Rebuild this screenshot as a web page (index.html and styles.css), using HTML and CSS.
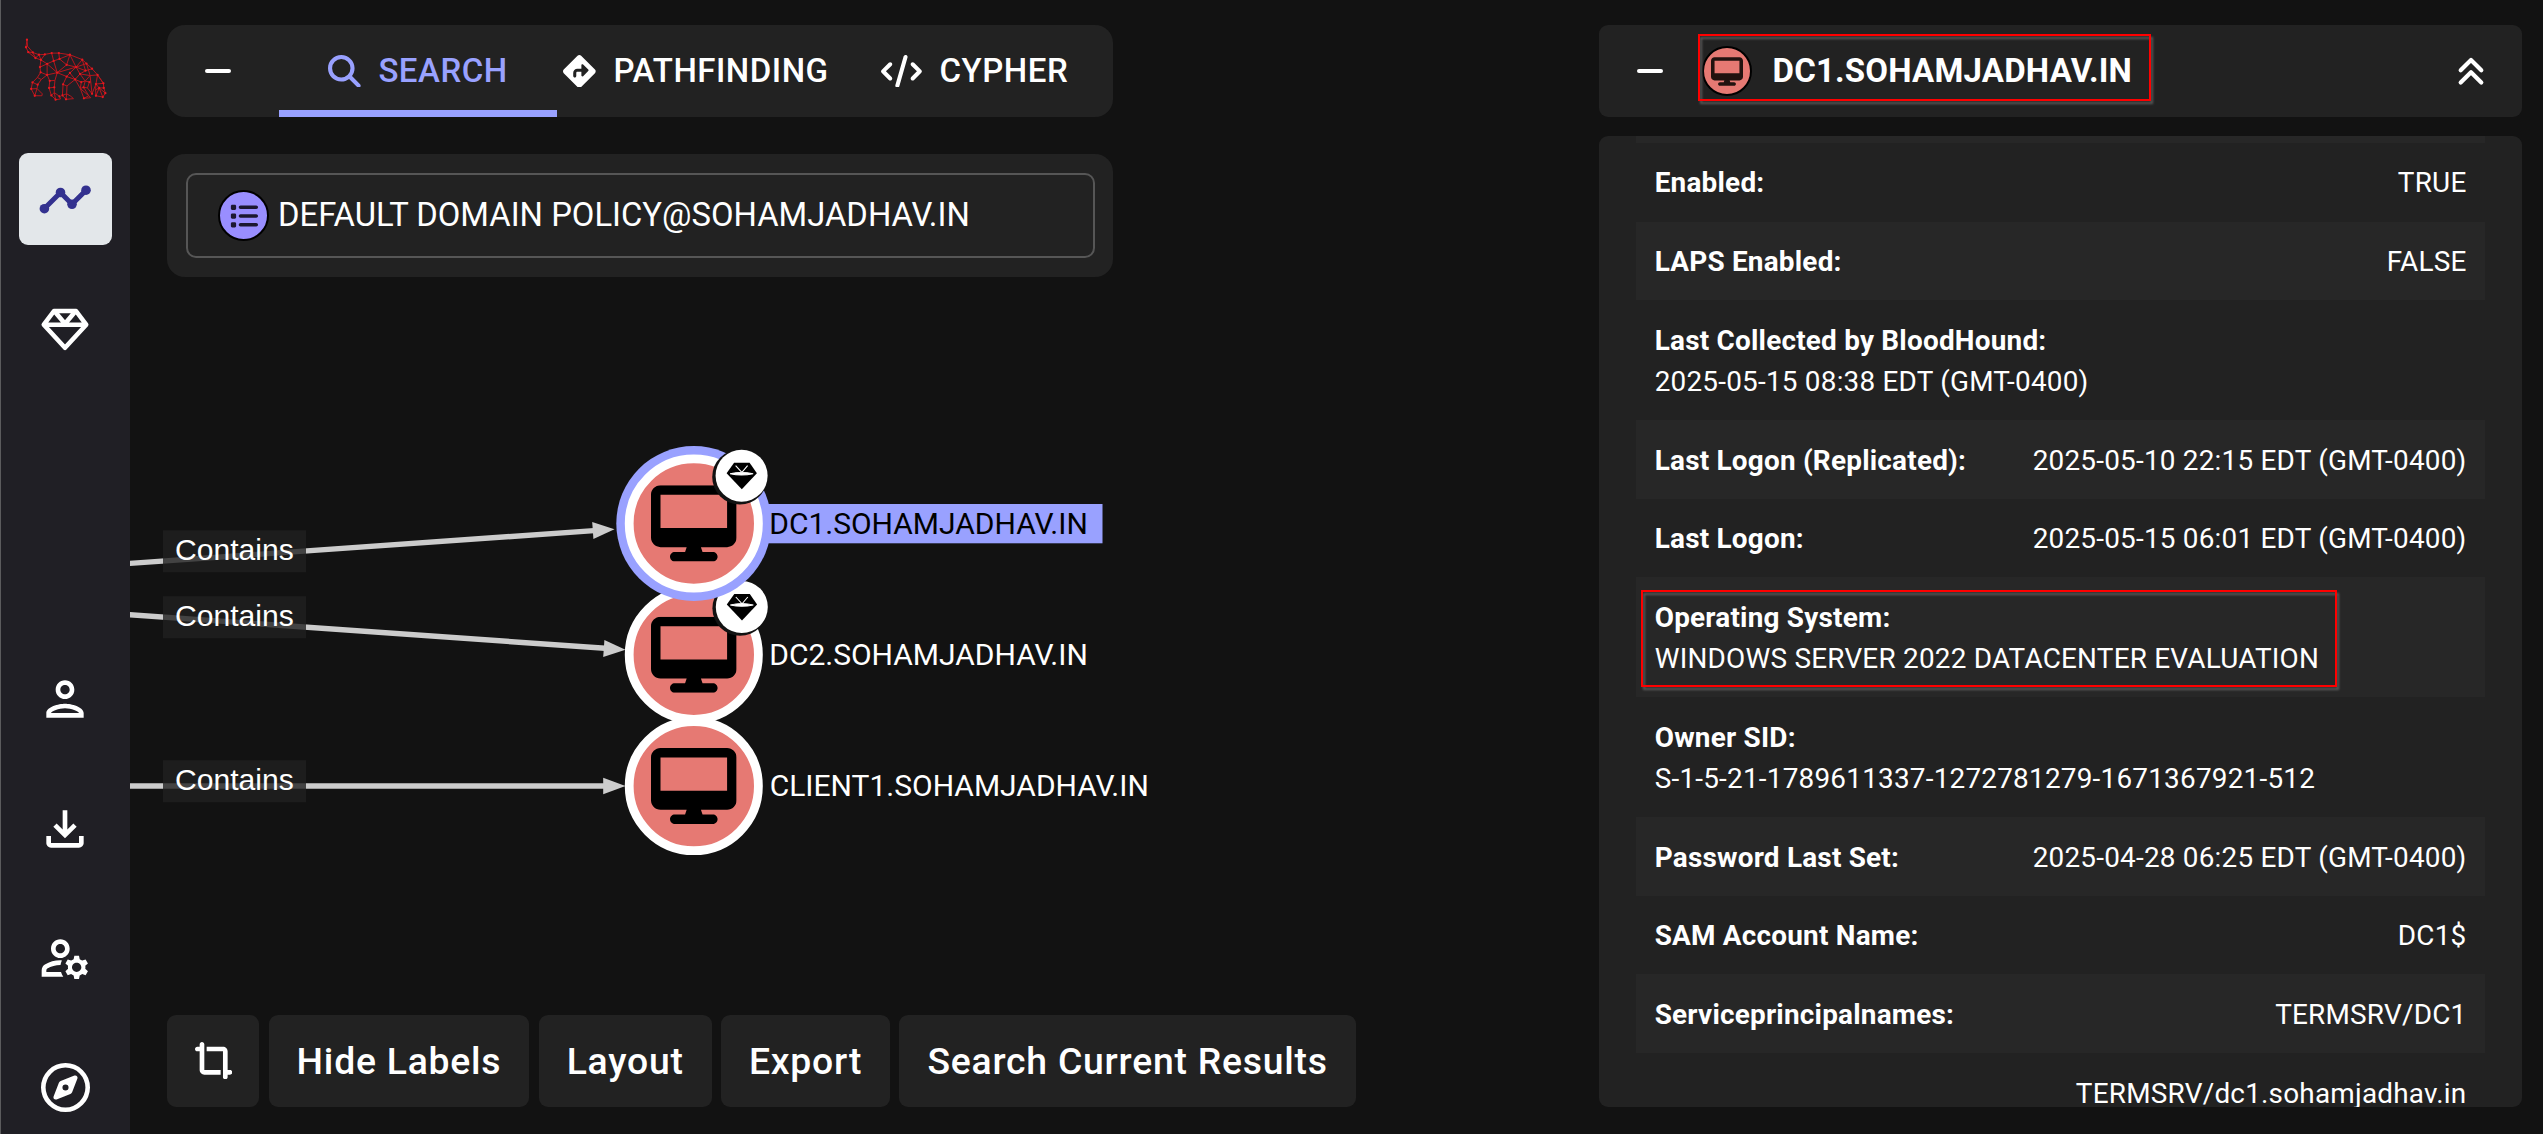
FILE: index.html
```html
<!DOCTYPE html>
<html lang="en">
<head>
<meta charset="utf-8">
<title>BloodHound</title>
<link rel="stylesheet" href="styles.css">
</head>
<body>
<svg width="0" height="0" class="defs" aria-hidden="true">
  <symbol id="desktop" viewBox="0 0 576 512"><path d="M64 0C28.7 0 0 28.7 0 64V352c0 35.3 28.7 64 64 64H240l-10.7 32H160c-17.7 0-32 14.3-32 32s14.3 32 32 32H416c17.7 0 32-14.3 32-32s-14.3-32-32-32H346.7L336 416H512c35.3 0 64-28.7 64-64V64c0-35.3-28.7-64-64-64H64zM512 64V288H64V64H512z"/></symbol>
  <symbol id="tier" viewBox="0 0 60 60">
    <circle cx="28.2" cy="31.2" r="27.6" fill="#121212"/>
    <circle cx="30" cy="30" r="26" fill="#fff"/>
    <path d="M22.5 17H38L45.3 27.5L30.2 43.5L15 27.5Z" fill="#000"/>
    <path d="M18.5 28Q30 25 41.5 28Q30 30.5 18.5 28ZM24 20L30 26.5M36 20L30.5 26.5" fill="#fff" stroke="#fff" stroke-width="1.1"/>
  </symbol>
</svg>
<div class="app">
  <nav class="sidebar">
    <svg class="logo" viewBox="0 0 312 240">
      <path d="M36 30L33 53L40 68L62 86L79 92L73 76L54 69L38 50ZM33 53L38 50M40 68L54 69L62 86L73 76M73 76L91 75L112 71L134 71L168 76L206 91L219 103L236 119L253 138L271 164L272 178L277 194L269 206L248 202L247 184L248 166L258 178L272 178M271 164L248 166L236 196L230 140L219 103M79 92L91 75M79 92L98 104L118 95L136 89L158 107L187 114L216 125L236 119M112 71L118 95L129 131L98 104L98 138L129 131L158 107L168 76L136 89L134 71M168 76L187 114L206 91L216 125L199 135L187 114L219 103M129 131L187 114L168 132L158 143L129 131M199 135L184 152L168 132M199 135L230 140L253 138L248 166M199 135L215 157L230 140M79 92L76 114L78 130L98 138M76 114L98 104M78 130L68 146L53 161L49 181L60 202L82 202L83 196L67 180L69 168L80 152L98 138M53 161L69 168M68 146L80 152M49 181L67 180L60 202M98 138L106 156L104 178L111 201L124 214L139 212L136 204L120 192L120 176L122 155L129 131M106 156L122 155M104 178L120 176M111 201L120 192L124 214M158 143L147 167L145 201L156 213L179 211L170 203L158 196L159 172L184 152M158 143L184 152M147 167L159 172M145 201L158 196L156 213M184 152L203 160L200 180L211 210L232 208L226 202L210 176L215 157L228 160L222 178L236 196M184 152L200 180L210 176M203 160L215 157M200 180L226 202L211 210M222 178L210 176M247 184L258 178L277 194M248 202L258 178L269 206M253 138L271 164"/>
      <path class="dots" d="M36 30h0M33 53h0M40 68h0M54 69h0M62 86h0M73 76h0M79 92h0M91 75h0M112 71h0M134 71h0M168 76h0M206 91h0M219 103h0M236 119h0M253 138h0M271 164h0M272 178h0M277 194h0M269 206h0M248 202h0M98 104h0M118 95h0M136 89h0M158 107h0M187 114h0M216 125h0M199 135h0M129 131h0M76 114h0M78 130h0M98 138h0M53 161h0M49 181h0M60 202h0M69 168h0M106 156h0M104 178h0M111 201h0M124 214h0M120 176h0M136 204h0M158 143h0M168 132h0M147 167h0M145 201h0M156 213h0M184 152h0M203 160h0M211 210h0M210 176h0M228 160h0M236 196h0M248 166h0M258 178h0"/>
    </svg>
    <a class="item active"><svg width="56" height="56" viewBox="0 0 56 56" fill="#33318f" stroke="#33318f"><path d="M7.2 37.7L23.5 21.5L35 33.3L49 19.2" fill="none" stroke-width="5"/><g stroke="none"><circle cx="7.4" cy="37.7" r="4.8"/><circle cx="23.5" cy="21.5" r="4.8"/><circle cx="35" cy="33.3" r="4.8"/><circle cx="49" cy="19.2" r="4.8"/></g></svg></a>
    <a class="item"><svg width="56" height="56" viewBox="0 0 56 56" fill="none" stroke="#fff" stroke-width="4.6" stroke-linejoin="round"><path d="M17 10H39L49.2 23.7L28 46.7L6.8 23.7ZM6.8 23.7H49.2M17.5 10.2L28 22.7L38.5 10.2"/></svg></a>
    <a class="item push"><svg width="56" height="56" viewBox="0 0 24 24"><path d="M12 6c1.1 0 2 .9 2 2s-.9 2-2 2-2-.9-2-2 .9-2 2-2m0 10c2.7 0 5.8 1.29 6 2H6c.23-.72 3.31-2 6-2m0-12C9.79 4 8 5.79 8 8s1.79 4 4 4 4-1.79 4-4-1.79-4-4-4m0 10c-2.67 0-8 1.34-8 4v2h16v-2c0-2.66-5.33-4-8-4"/></svg></a>
    <a class="item"><svg width="56" height="56" viewBox="0 0 24 24"><path d="M18 15v3H6v-3H4v3c0 1.1.9 2 2 2h12c1.1 0 2-.9 2-2v-3zm-1-4-1.41-1.41L13 12.17V4h-2v8.17L8.41 9.59 7 11l5 5z"/></svg></a>
    <a class="item"><svg width="56" height="56" viewBox="0 0 24 24"><path d="M4 18v-.65c0-.34.16-.66.41-.81C6.1 15.53 8.03 15 10 15c.03 0 .05 0 .08.01.1-.7.3-1.37.59-1.98-.22-.02-.44-.03-.67-.03-2.42 0-4.68.67-6.61 1.82-.88.52-1.39 1.5-1.39 2.53V20h9.26c-.42-.6-.75-1.28-.97-2zm6-6c2.21 0 4-1.79 4-4s-1.79-4-4-4-4 1.79-4 4 1.79 4 4 4m0-6c1.1 0 2 .9 2 2s-.9 2-2 2-2-.9-2-2 .9-2 2-2m10.75 10c0-.22-.03-.42-.06-.63l1.14-1.01-1-1.73-1.45.49q-.48-.405-1.08-.63L18 11h-2l-.3 1.49q-.6.225-1.08.63l-1.45-.49-1 1.73 1.14 1.01c-.03.21-.06.41-.06.63s.03.42.06.63l-1.14 1.01 1 1.73 1.45-.49q.48.405 1.08.63L16 21h2l.3-1.49q.6-.225 1.08-.63l1.45.49 1-1.73-1.14-1.01c.03-.21.06-.41.06-.63M17 18c-1.1 0-2-.9-2-2s.9-2 2-2 2 .9 2 2-.9 2-2 2"/></svg></a>
    <a class="item"><svg width="49" height="49" viewBox="0 0 512 512"><path d="M464 256A208 208 0 1 0 48 256a208 208 0 1 0 416 0zM0 256a256 256 0 1 1 512 0A256 256 0 1 1 0 256zm306.7 69.1L162.4 380.6c-19.4 7.5-38.5-11.6-31-31l55.5-144.3c3.3-8.5 9.9-15.1 18.4-18.4l144.3-55.5c19.4-7.5 38.5 11.6 31 31L325.1 306.7c-3.3 8.5-9.9 15.1-18.4 18.4zM288 256a32 32 0 1 0 -64 0 32 32 0 1 0 64 0z"/></svg></a>
  </nav>

  <main class="main">
    <svg class="graph" width="1200" height="1134" viewBox="130 0 1200 1134">
      <g stroke="#ccc" stroke-width="5.4">
        <path d="M120 564.1L594 530.6"/><path d="M120 614L605 648.3"/><path d="M120 786H605"/>
      </g>
      <g fill="#ccc">
        <path d="M614.5 529.2L592.2 522L593.4 539Z"/><path d="M625.5 649.7L604.4 640L603.2 656.9Z"/><path d="M625.5 786L603.2 777.7V794.3Z"/>
      </g>
      <g fill="#212121" fill-opacity=".8">
        <rect x="163" y="530.3" width="143" height="42"/><rect x="163" y="596.2" width="143" height="42"/><rect x="163" y="760.2" width="143" height="42"/>
      </g>
      <g class="edge-label"><text x="175" y="559.7">Contains</text><text x="175" y="625.8">Contains</text><text x="175" y="789.7">Contains</text></g>
      <g><circle cx="693.8" cy="786.1" r="64.6" fill="#e67973" stroke="#fff" stroke-width="8.8"/><use href="#desktop" x="651" y="748" width="85.6" height="76.1"/></g>
      <g><circle cx="693.8" cy="654.8" r="64.6" fill="#e67973" stroke="#fff" stroke-width="8.8"/><use href="#desktop" x="651" y="616.7" width="85.6" height="76.1"/><use href="#tier" x="711.8" y="577" width="60" height="60"/></g>
      <rect x="760" y="504" width="342.5" height="39.3" fill="#99a1ff"/>
      <g><circle cx="693.8" cy="523.5" r="77.5" fill="#99a1ff"/><circle cx="693.8" cy="523.5" r="64.6" fill="#e67973" stroke="#fff" stroke-width="8.8"/><use href="#desktop" x="651" y="485.3" width="85.6" height="76.1"/><use href="#tier" x="711.6" y="445.7" width="60" height="60"/></g>
      <g class="node-label"><text class="dark" x="769.2" y="534">DC1.SOHAMJADHAV.IN</text><text x="769.2" y="665.3">DC2.SOHAMJADHAV.IN</text><text x="769.7" y="796.3">CLIENT1.SOHAMJADHAV.IN</text></g>
    </svg>

    <section class="left">
      <header class="tabs">
        <span class="minus"></span>
        <div class="tab selected"><svg width="32.7" height="32.7" viewBox="0 0 512 512"><path d="M416 208c0 45.9-14.9 88.3-40 122.7L502.6 457.4c12.5 12.5 12.5 32.8 0 45.3s-32.8 12.5-45.3 0L330.7 376c-34.4 25.2-76.8 40-122.7 40C93.1 416 0 322.9 0 208S93.1 0 208 0S416 93.1 416 208zM208 352a144 144 0 1 0 0-288 144 144 0 1 0 0 288z"/></svg><span>SEARCH</span></div>
        <div class="tab"><svg width="32.7" height="32.7" viewBox="0 0 512 512"><path d="M227.7 11.7c15.6-15.6 40.9-15.6 56.6 0l216 216c15.6 15.6 15.6 40.9 0 56.6l-216 216c-15.6 15.6-40.9 15.6-56.6 0l-216-216c-15.6-15.6-15.6-40.9 0-56.6l216-216zm87.6 137c-4.6-4.6-11.5-5.9-17.4-3.5s-9.9 8.3-9.9 14.8v56H224c-35.3 0-64 28.7-64 64v48c0 13.3 10.7 24 24 24s24-10.7 24-24V280c0-8.8 7.2-16 16-16h64v56c0 6.5 3.9 12.3 9.9 14.8s12.9 1.1 17.4-3.5l80-80c6.2-6.2 6.2-16.4 0-22.6l-80-80z"/></svg><span>PATHFINDING</span></div>
        <div class="tab"><svg width="40.9" height="32.7" viewBox="0 0 640 512"><path d="M392.8 1.2c-17-4.9-34.7 5-39.6 22l-128 448c-4.9 17 5 34.7 22 39.6s34.7-5 39.6-22l128-448c4.9-17-5-34.7-22-39.6zm80.6 120.1c-12.5 12.5-12.5 32.8 0 45.3L562.7 256l-89.4 89.4c-12.5 12.5-12.5 32.8 0 45.3s32.8 12.5 45.3 0l112-112c12.5-12.5 12.5-32.8 0-45.3l-112-112c-12.5-12.5-32.8-12.5-45.3 0zm-306.7 0c-12.5-12.5-32.8-12.5-45.3 0l-112 112c-12.5 12.5-12.5 32.8 0 45.3l112 112c12.5 12.5 32.8 12.5 45.3 0s12.5-32.8 0-45.3L77.3 256l89.4-89.4c12.5-12.5 12.5-32.8 0-45.3z"/></svg><span>CYPHER</span></div>
      </header>
      <div class="search">
        <div class="field">
          <span class="gpo"><svg width="28" height="28" viewBox="0 0 512 512"><path d="M40 48C26.7 48 16 58.7 16 72v48c0 13.3 10.7 24 24 24H88c13.3 0 24-10.7 24-24V72c0-13.3-10.7-24-24-24H40zM192 64c-17.7 0-32 14.3-32 32s14.3 32 32 32H480c17.7 0 32-14.3 32-32s-14.3-32-32-32H192zm0 160c-17.7 0-32 14.3-32 32s14.3 32 32 32H480c17.7 0 32-14.3 32-32s-14.3-32-32-32H192zm0 160c-17.7 0-32 14.3-32 32s14.3 32 32 32H480c17.7 0 32-14.3 32-32s-14.3-32-32-32H192zM16 232v48c0 13.3 10.7 24 24 24H88c13.3 0 24-10.7 24-24V232c0-13.3-10.7-24-24-24H40c-13.3 0-24 10.7-24 24zM40 368c-13.3 0-24 10.7-24 24v48c0 13.3 10.7 24 24 24H88c13.3 0 24-10.7 24-24V392c0-13.3-10.7-24-24-24H40z"/></svg></span>
          <span class="query">DEFAULT DOMAIN POLICY@SOHAMJADHAV.IN</span>
        </div>
      </div>
      <div class="toolbar">
        <button class="btn crop"><svg width="37.3" height="37.3" viewBox="0 0 512 512"><path d="M128 32c0-17.7-14.3-32-32-32S64 14.3 64 32V64H32C14.3 64 0 78.3 0 96s14.3 32 32 32H64V384c0 35.3 28.7 64 64 64H352V384H128V32zM384 480c0 17.7 14.3 32 32 32s32-14.3 32-32V448h32c17.7 0 32-14.3 32-32s-14.3-32-32-32H448l0-256c0-35.3-28.7-64-64-64L160 64v64l224 0 0 352z"/></svg></button>
        <button class="btn">Hide Labels</button>
        <button class="btn">Layout</button>
        <button class="btn">Export</button>
        <button class="btn">Search Current Results</button>
      </div>
    </section>

    <section class="right">
      <header class="entity">
        <span class="minus"></span>
        <span class="computer"><svg width="32" height="29"><use href="#desktop" width="32" height="29"/></svg></span>
        <h1>DC1.SOHAMJADHAV.IN</h1>
        <svg class="collapse" width="28" height="30" viewBox="0 0 28 30"><path d="M3.7 14.2L14 4L24.3 14.2M3.7 26.4L14 16.2L24.3 26.4"/></svg>
        <i class="mark mark-title"></i>
      </header>
      <div class="details">
        <div class="rows">
          <div class="row sliver"></div>
          <div class="row"><b>Enabled:</b><span>TRUE</span></div>
          <div class="row"><b>LAPS Enabled:</b><span>FALSE</span></div>
          <div class="row stacked"><b>Last Collected by BloodHound:</b><span>2025-05-15 08:38 EDT (GMT-0400)</span></div>
          <div class="row"><b>Last Logon (Replicated):</b><span>2025-05-10 22:15 EDT (GMT-0400)</span></div>
          <div class="row"><b>Last Logon:</b><span>2025-05-15 06:01 EDT (GMT-0400)</span></div>
          <div class="row stacked"><b>Operating System:</b><span>WINDOWS SERVER 2022 DATACENTER EVALUATION</span><i class="mark mark-os"></i></div>
          <div class="row stacked"><b>Owner SID:</b><span>S-1-5-21-1789611337-1272781279-1671367921-512</span></div>
          <div class="row"><b>Password Last Set:</b><span>2025-04-28 06:25 EDT (GMT-0400)</span></div>
          <div class="row"><b>SAM Account Name:</b><span>DC1$</span></div>
          <div class="row"><b>Serviceprincipalnames:</b><span>TERMSRV/DC1</span></div>
          <div class="row value-only"><span>TERMSRV/dc1.sohamjadhav.in</span></div>
        </div>
      </div>
    </section>
  </main>
</div>
</body>
</html>
```
FILE: styles.css
```css
* { box-sizing: border-box; }
body {
  margin: 0;
  background: #121212;
  color: #fff;
  font-family: Roboto, sans-serif;
  overflow: hidden;
}
.defs { display: block; position: absolute; }
.app { display: flex; height: 1134px; }

.sidebar {
  width: 130px;
  flex: none;
  background: #201f25;
  border-left: 1px solid #5b5b5d;
  display: flex;
  flex-direction: column;
  align-items: center;
  gap: 37.3px;
  padding: 30px 0 0;
}
.logo {
  width: 104px;
  height: 80px;
  margin: 0 11px 7.7px 13px;
  align-self: flex-start;
  fill: none;
  stroke: #b8171d;
  stroke-width: 3;
}
.logo .dots { stroke: #e8181f; stroke-width: 7; stroke-linecap: round; }
.item {
  width: 93px;
  height: 92.2px;
  flex: none;
  display: grid;
  place-items: center;
  border-radius: 9px;
  fill: #fff;
}
.item.active { background: #e3e7ea; }
.item svg { margin-right: 1px; }
.item.push { margin-top: 241.3px; }

.main {
  flex: 1;
  position: relative;
  display: flex;
  justify-content: space-between;
  padding: 25px 21px 27px 37px;
}
.graph { position: absolute; left: 0; top: 0; }
.edge-label { font: 30.1px "Liberation Sans", Arial, sans-serif; fill: #fff; }
.node-label { font-size: 30px; fill: #fff; }
.node-label .dark { fill: #000; }

.left {
  position: relative;
  display: flex;
  flex-direction: column;
  align-items: flex-start;
}
.tabs {
  width: 946px;
  height: 92px;
  display: flex;
  border-radius: 18px;
  background: #222;
  padding-left: 38px;
  align-items: center;
}
.minus {
  width: 26px;
  height: 4.6px;
  border-radius: 2.3px;
  background: #fff;
  flex: none;
}
.tabs .minus { margin-right: 48px; }
.tab {
  height: 92px;
  display: flex;
  align-items: center;
  gap: 17.7px;
  font-size: 33px;
  font-weight: 500;
  letter-spacing: .5px;
}
.tab span, .query { padding-bottom: 2px; }
.tab svg, .computer svg, .gpo svg, .btn svg { flex: none; display: block; }
.tab svg { fill: currentColor; }
.tab + .tab { padding-left: 6px; }
.tab:nth-child(3) { width: 318px; }
.tab.selected {
  width: 278px;
  padding: 7px 0 0 49px;
  border-bottom: 7px solid #99a1ff;
  color: #99a1ff;
}
.search {
  width: 946px;
  height: 123px;
  margin-top: 37px;
  padding: 19px 18px 19px 19px;
  border-radius: 18px;
  background: #222;
}
.field {
  height: 85px;
  border: 2px solid #565656;
  border-radius: 10px;
  display: flex;
  align-items: center;
  gap: 9px;
  padding-left: 30px;
  font-size: 32.8px;
}
.gpo, .computer {
  width: 51px;
  height: 51px;
  border: 2px solid #000;
  border-radius: 50%;
  display: grid;
  place-items: center;
  flex: none;
}
.gpo { background: #998eff; fill: #1c1830; }
.toolbar { display: flex; gap: 9.3px; margin-top: auto; }
.btn {
  height: 92px;
  border: 0;
  border-radius: 9px;
  padding: 0 28px 1px;
  background: #222;
  color: #fff;
  fill: #fff;
  font: 500 37.33px Roboto, sans-serif;
  letter-spacing: .77px;
  white-space: nowrap;
}
.btn.crop { width: 92.3px; }

.right {
  position: relative;
  width: 923.5px;
  display: flex;
  flex-direction: column;
  gap: 19px;
}
.entity {
  position: relative;
  height: 92px;
  display: flex;
  align-items: center;
  border-radius: 9px;
  background: #222;
  padding: 0 37px 0 38px;
}
.computer {
  width: 50px;
  height: 50px;
  margin-left: 39px;
  background: #e67973;
  fill: #21120f;
}
.computer svg { margin-top: 1px; }
h1 {
  margin: 0 0 0 21px;
  padding-bottom: 2px;
  flex: 1;
  font-size: 33px;
  font-weight: 700;
  letter-spacing: .2px;
}
.collapse {
  fill: none;
  stroke: #fff;
  stroke-width: 4.2;
  stroke-linecap: round;
  stroke-linejoin: round;
}
.mark {
  position: absolute;
  border: 2px solid #f00;
  filter: drop-shadow(2.5px 3px 1.2px #5c5c5c);
}
.mark-title { left: 99px; top: 9px; width: 453px; height: 67px; }

.details {
  height: 971px;
  border-radius: 9px;
  background: #222;
  overflow: hidden;
  padding: 0 37.5px 0 37.5px;
}
.row {
  position: relative;
  display: flex;
  justify-content: space-between;
  height: 78.65px;
  padding: 19.6px 18px 0 18.7px;
  font-size: 27.9px;
  line-height: 41.3px;
  letter-spacing: .22px;
}
.row:nth-child(odd) { background: #272727; }
.row.sliver { height: 6.9px; padding: 0; }
.row.stacked { height: 119.9px; display: block; }
.row b, .row span { display: block; }
.row.value-only { justify-content: flex-end; background: none; }
.mark-os { left: 5px; top: 13px; width: 696px; height: 97px; }
```
